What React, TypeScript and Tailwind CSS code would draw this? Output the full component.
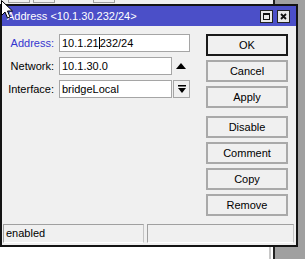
import React from 'react';

const font = "font-['Liberation_Sans',Arial,sans-serif]";

function ActionButton({ label, primary }: { label: string; primary?: boolean }) {
  return (
    <div
      className={`h-[22px] flex items-center justify-center border-2 bg-[#f0f0f0] text-[11px] text-black ${
        primary ? 'border-[#1a1a1a]' : 'border-[#a9a9a9]'
      }`}
    >
      {label}
    </div>
  );
}

function FieldRow({ label, blue, children }: { label: string; blue?: boolean; children: React.ReactNode }) {
  return (
    <div className="flex items-center h-[18px]">
      <div className={`w-[52px] text-right text-[11px] ${blue ? 'text-[#3535cf]' : 'text-black'}`}>{label}</div>
      <div className="ml-[5px] flex items-center">{children}</div>
    </div>
  );
}

function TextBox({ width, children }: { width: string; children: React.ReactNode }) {
  return (
    <div className={`${width} h-[18px] border border-[#a5a5a5] bg-white pl-[2px] flex items-center text-[11px] text-black whitespace-nowrap`}>
      {children}
    </div>
  );
}

export default function App() {
  return (
    <div className={`w-[305px] h-[259px] overflow-hidden relative bg-[#a0a0a0] ${font}`}>
      {/* window behind, top strip */}
      <div className="flex h-[4px]">
        <div className="w-[273px] bg-[#f0f0f0] relative">
          <div className="flex h-[3px]">
            <div className="ml-[8px] w-[22px] border border-t-0 border-[#a0a0a0]" />
            <div className="ml-[3px] w-[22px] border border-t-0 border-[#a0a0a0]" />
            <div className="ml-[38px] w-[22px] border border-t-0 border-[#a0a0a0]" />
          </div>
        </div>
        <div className="w-[2px] bg-[#222]" />
        <div className="flex-1" />
      </div>

      <div className="flex h-[243px]">
        {/* dialog */}
        <div className="w-[298px] h-full border-2 border-[#141414] bg-[#f0f0f0] flex flex-col">
          <div className="h-[20px] bg-[#4b4fc8] flex items-center pl-[5px] pr-[6px]">
            <span className="text-white text-[11px] flex-1">Address &lt;10.1.30.232/24&gt;</span>
            <div className="flex gap-[4px]">
              <div className="w-[13px] h-[13px] border border-[#222] bg-[#e8e8e8] flex items-center justify-center">
                <div className="w-[7px] h-[7px] border border-t-2 border-[#111]" />
              </div>
              <div className="w-[13px] h-[13px] border border-[#222] bg-[#e8e8e8] flex items-center justify-center">
                <svg width="7" height="7" viewBox="0 0 7 7">
                  <path d="M1 1 L6 6 M6 1 L1 6" stroke="#111" strokeWidth="1.8" />
                </svg>
              </div>
            </div>
          </div>

          <div className="flex-1 flex pt-[8px]">
            <div className="flex flex-col gap-[5px] w-[204px]">
              <FieldRow label="Address:" blue>
                <TextBox width="w-[131px]">
                  10.1.21<span className="inline-block w-px h-[12px] bg-black" />232/24
                </TextBox>
              </FieldRow>
              <FieldRow label="Network:">
                <TextBox width="w-[113px]">10.1.30.0</TextBox>
                <svg className="ml-[4px]" width="10" height="6" viewBox="0 0 10 6">
                  <path d="M0 6 L5 0 L10 6 Z" fill="#000" />
                </svg>
              </FieldRow>
              <FieldRow label="Interface:">
                <TextBox width="w-[113px]">bridgeLocal</TextBox>
                <div className="ml-px w-[17px] h-[18px] border border-[#a5a5a5] bg-[#f0f0f0] flex items-center justify-center">
                  <svg width="8" height="8" viewBox="0 0 8 8">
                    <rect x="0" y="0" width="8" height="1.5" fill="#000" />
                    <path d="M0 3 L8 3 L4 8 Z" fill="#000" />
                  </svg>
                </div>
              </FieldRow>
            </div>

            <div className="w-[82px] flex flex-col">
              <div className="flex flex-col gap-[4px]">
                <ActionButton label="OK" primary />
                <ActionButton label="Cancel" />
                <ActionButton label="Apply" />
              </div>
              <div className="flex flex-col gap-[4px] mt-[8px]">
                <ActionButton label="Disable" />
                <ActionButton label="Comment" />
                <ActionButton label="Copy" />
                <ActionButton label="Remove" />
              </div>
            </div>
          </div>

          <div className="flex gap-[3px] pl-px pr-[2px] pb-[2px]">
            <div className="w-[141px] h-[19px] border border-[#a0a0a0] border-b-white border-r-[#c4c4c4] flex items-center pl-[2px] text-[11px] text-black">
              enabled
            </div>
            <div className="flex-1 h-[19px] border border-[#a0a0a0] border-b-white border-r-[#c4c4c4]" />
          </div>
        </div>
        <div className="flex-1" />
      </div>

      {/* window behind, bottom strip */}
      <div className="flex h-[12px]">
        <div className="w-[269px] bg-white" />
        <div className="w-[2px] bg-[#c8c8c8]" />
        <div className="w-[2px] bg-white" />
        <div className="w-[2px] bg-[#222]" />
        <div className="flex-1" />
      </div>

      {/* mouse pointer */}
      <svg className="absolute left-0 top-0" width="14" height="20" viewBox="0 0 14 20">
        <path d="M1.5 0.5 L1.5 15.5 L5 12 L7.5 18 L10 17 L7.5 11 L12.5 11 Z" fill="#fff" stroke="#000" strokeWidth="1" />
      </svg>
    </div>
  );
}
